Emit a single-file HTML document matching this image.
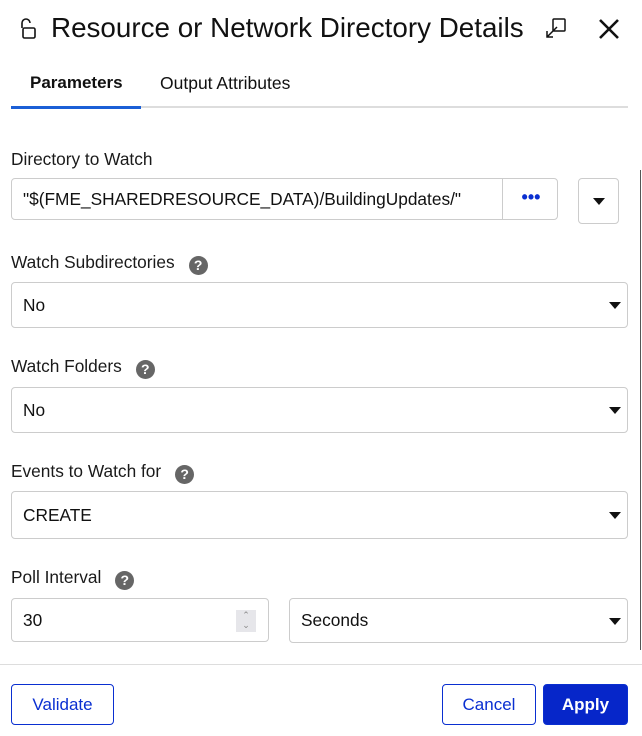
<!DOCTYPE html><html><head><style>
body{margin:0;width:642px;height:736px;background:#fff;font-family:"Liberation Sans",sans-serif;color:#111;position:relative;overflow:hidden}
.a{position:absolute}
.lbl{position:absolute;left:11px;font-size:17.3px;color:#1a1a1a}
.help{display:inline-block;width:19px;height:19px;border-radius:50%;background:#666;color:#fff;font-size:14px;font-weight:bold;text-align:center;line-height:19px;margin-left:14px;vertical-align:-2px}
.box{position:absolute;border:1px solid #ccc;border-radius:4px;box-sizing:border-box;font-size:17.3px;display:flex;align-items:center;padding-left:11px}
.tri{position:absolute;right:6px;top:50%;margin-top:-3px;width:0;height:0;border-left:6px solid transparent;border-right:6px solid transparent;border-top:7px solid #111}
.btn{position:absolute;top:684px;height:41px;box-sizing:border-box;border:1px solid #0a2fd1;border-radius:4px;color:#0a2fd1;font-size:17px;display:flex;align-items:center;justify-content:center}
</style></head><body>
<svg class="a" style="left:17px;top:17px" width="22" height="24" viewBox="0 0 22 24"><path d="M5 11V6a4 4 0 0 1 8 0" fill="none" stroke="#111" stroke-width="1.6"/><rect x="6" y="11" width="12" height="10" rx="1.5" fill="none" stroke="#111" stroke-width="1.6"/></svg>
<div class="a" style="left:51px;top:12px;font-size:27.8px;color:#111">Resource or Network Directory Details</div>
<svg class="a" style="left:544px;top:16px" width="24" height="24" viewBox="0 0 24 24"><rect x="9" y="3" width="12" height="12" rx="1" fill="none" stroke="#111" stroke-width="1.5"/><path d="M13 11L3 21M3 15v6h6" fill="none" stroke="#111" stroke-width="1.5"/></svg>
<svg class="a" style="left:598px;top:18px" width="22" height="22" viewBox="0 0 22 22"><path d="M2 2L20 20M20 2L2 20" stroke="#111" stroke-width="2.6"/></svg>
<div class="a" style="left:30px;top:73px;font-size:17px;font-weight:bold">Parameters</div>
<div class="a" style="left:160px;top:73px;font-size:17.5px">Output Attributes</div>
<div class="a" style="left:11px;top:106px;width:617px;height:2px;background:#ddd"></div>
<div class="a" style="left:11px;top:106px;width:130px;height:3px;background:#1b5fd6"></div>
<div class="a" style="left:640px;top:170px;width:1px;height:480px;background:#555"></div>
<div class="lbl" style="top:149px">Directory to Watch</div>
<div class="box" style="left:11px;top:178px;width:547px;height:42px">"$(FME_SHAREDRESOURCE_DATA)/BuildingUpdates/"<div class="a" style="left:490px;top:0;bottom:0;border-left:1px solid #ccc;width:56px;color:#0a2fd1;font-weight:bold;text-align:center;line-height:36px;font-size:18px">•••</div></div>
<div class="box" style="left:578px;top:178px;width:41px;height:46px"><div class="tri" style="right:13px"></div></div>
<div class="lbl" style="top:252px">Watch Subdirectories<span class="help">?</span></div>
<div class="box" style="left:11px;top:282px;width:617px;height:46px">No<div class="tri"></div></div>
<div class="lbl" style="top:356px">Watch Folders<span class="help">?</span></div>
<div class="box" style="left:11px;top:387px;width:617px;height:46px">No<div class="tri"></div></div>
<div class="lbl" style="top:461px">Events to Watch for<span class="help">?</span></div>
<div class="box" style="left:11px;top:491px;width:617px;height:48px">CREATE<div class="tri"></div></div>
<div class="lbl" style="top:567px">Poll Interval<span class="help">?</span></div>
<div class="box" style="left:11px;top:598px;width:258px;height:44px">30<div class="a" style="left:224px;top:11px;width:20px;height:22px;background:#e6e6ea;color:#888;font-size:9px;text-align:center;line-height:10px">⌃<br>⌄</div></div>
<div class="box" style="left:289px;top:598px;width:339px;height:45px">Seconds<div class="tri"></div></div>
<div class="a" style="left:0;top:664px;width:642px;height:1px;background:#ddd"></div>
<div class="btn" style="left:11px;width:103px">Validate</div>
<div class="btn" style="left:442px;width:94px">Cancel</div>
<div class="btn" style="left:543px;width:85px;background:#0626c9;color:#fff;font-weight:bold">Apply</div>
</body></html>
